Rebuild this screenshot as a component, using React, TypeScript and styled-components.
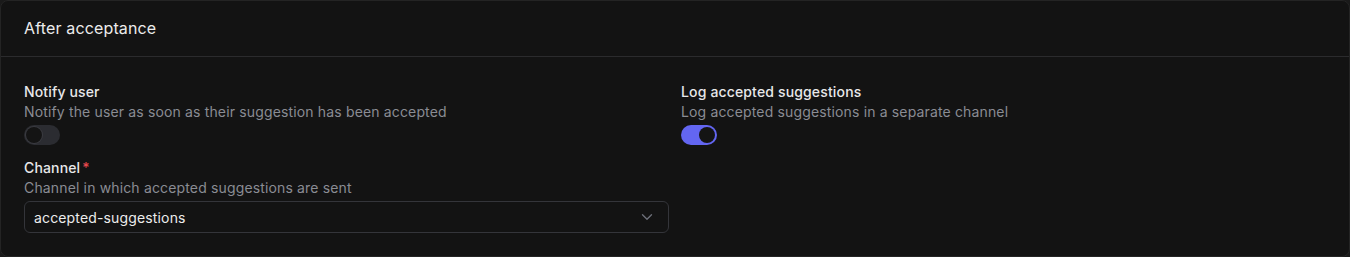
import * as React from "react";
import styled, { createGlobalStyle } from "styled-components";

const Global = createGlobalStyle`
  html, body {
    margin: 0;
    padding: 0;
    background: #1a1a1a;
  }
  body {
    font-family: Inter, "Noto Sans", sans-serif;
    -webkit-font-smoothing: antialiased;
  }
  * { box-sizing: border-box; }
`;

const Card = styled.section`
  width: 1350px;
  height: 257px;
  background: #131313;
  border: 1px solid #242424;
  border-radius: 8px;
  overflow: hidden;
`;

const CardHeader = styled.header`
  height: 56px;
  padding: 0 23px 1px;
  display: flex;
  align-items: center;
  border-bottom: 1px solid #2b2b2d;
  color: #ececec;
  font-size: 16px;
  letter-spacing: 0.15px;
`;

const CardBody = styled.div`
  padding: 25px 23px 0;
  display: grid;
  grid-template-columns: 1fr 1fr;
  column-gap: 12px;
`;

const Column = styled.div`
  display: flex;
  flex-direction: column;
  gap: 13px;
`;

const Field = styled.div`
  display: flex;
  flex-direction: column;
`;

const Label = styled.div`
  font-size: 14px;
  line-height: 20px;
  font-weight: 500;
  letter-spacing: 0.15px;
  color: #e8e8ea;
`;

const Required = styled.span`
  color: #e5484d;
  margin-left: 2px;
`;

const Description = styled.div`
  font-size: 14px;
  line-height: 20px;
  letter-spacing: 0.15px;
  color: #8a8c93;
`;

const Track = styled.button<{ $on: boolean }>`
  margin-top: 3px;
  width: 36px;
  height: 20px;
  padding: 2px;
  border: none;
  border-radius: 10px;
  background: ${(p) => (p.$on ? "#6366f1" : "#2b2c31")};
  display: flex;
  justify-content: ${(p) => (p.$on ? "flex-end" : "flex-start")};
  cursor: pointer;
`;

const Thumb = styled.span<{ $on: boolean }>`
  width: 16px;
  height: 16px;
  border-radius: 50%;
  background: #141414;
  box-shadow: ${(p) => (p.$on ? "none" : "0 0 0 1px #3a3b40")};
`;

const Select = styled.div`
  margin-top: 3px;
  height: 32px;
  border: 1px solid #34353a;
  border-radius: 6px;
  padding: 0 12px 0 9px;
  display: flex;
  align-items: center;
  justify-content: space-between;
  font-size: 14px;
  letter-spacing: 0.15px;
  color: #ececec;
`;

const Chevron = () => (
  <svg width="18" height="18" viewBox="0 0 24 24" fill="none" stroke="#6b6e78" strokeWidth="1.8" strokeLinecap="round" strokeLinejoin="round">
    <path d="m6 9 6 6 6-6" />
  </svg>
);

const Switch = ({ on }: { on: boolean }) => (
  <Track $on={on} role="switch" aria-checked={on}>
    <Thumb $on={on} />
  </Track>
);

export default function App() {
  return (
    <>
      <Global />
      <Card>
        <CardHeader>After acceptance</CardHeader>
        <CardBody>
          <Column>
            <Field>
              <Label>Notify user</Label>
              <Description>Notify the user as soon as their suggestion has been accepted</Description>
              <Switch on={false} />
            </Field>
            <Field>
              <Label>
                Channel<Required>*</Required>
              </Label>
              <Description>Channel in which accepted suggestions are sent</Description>
              <Select>
                accepted-suggestions
                <Chevron />
              </Select>
            </Field>
          </Column>
          <Column>
            <Field>
              <Label>Log accepted suggestions</Label>
              <Description>Log accepted suggestions in a separate channel</Description>
              <Switch on={true} />
            </Field>
          </Column>
        </CardBody>
      </Card>
    </>
  );
}
